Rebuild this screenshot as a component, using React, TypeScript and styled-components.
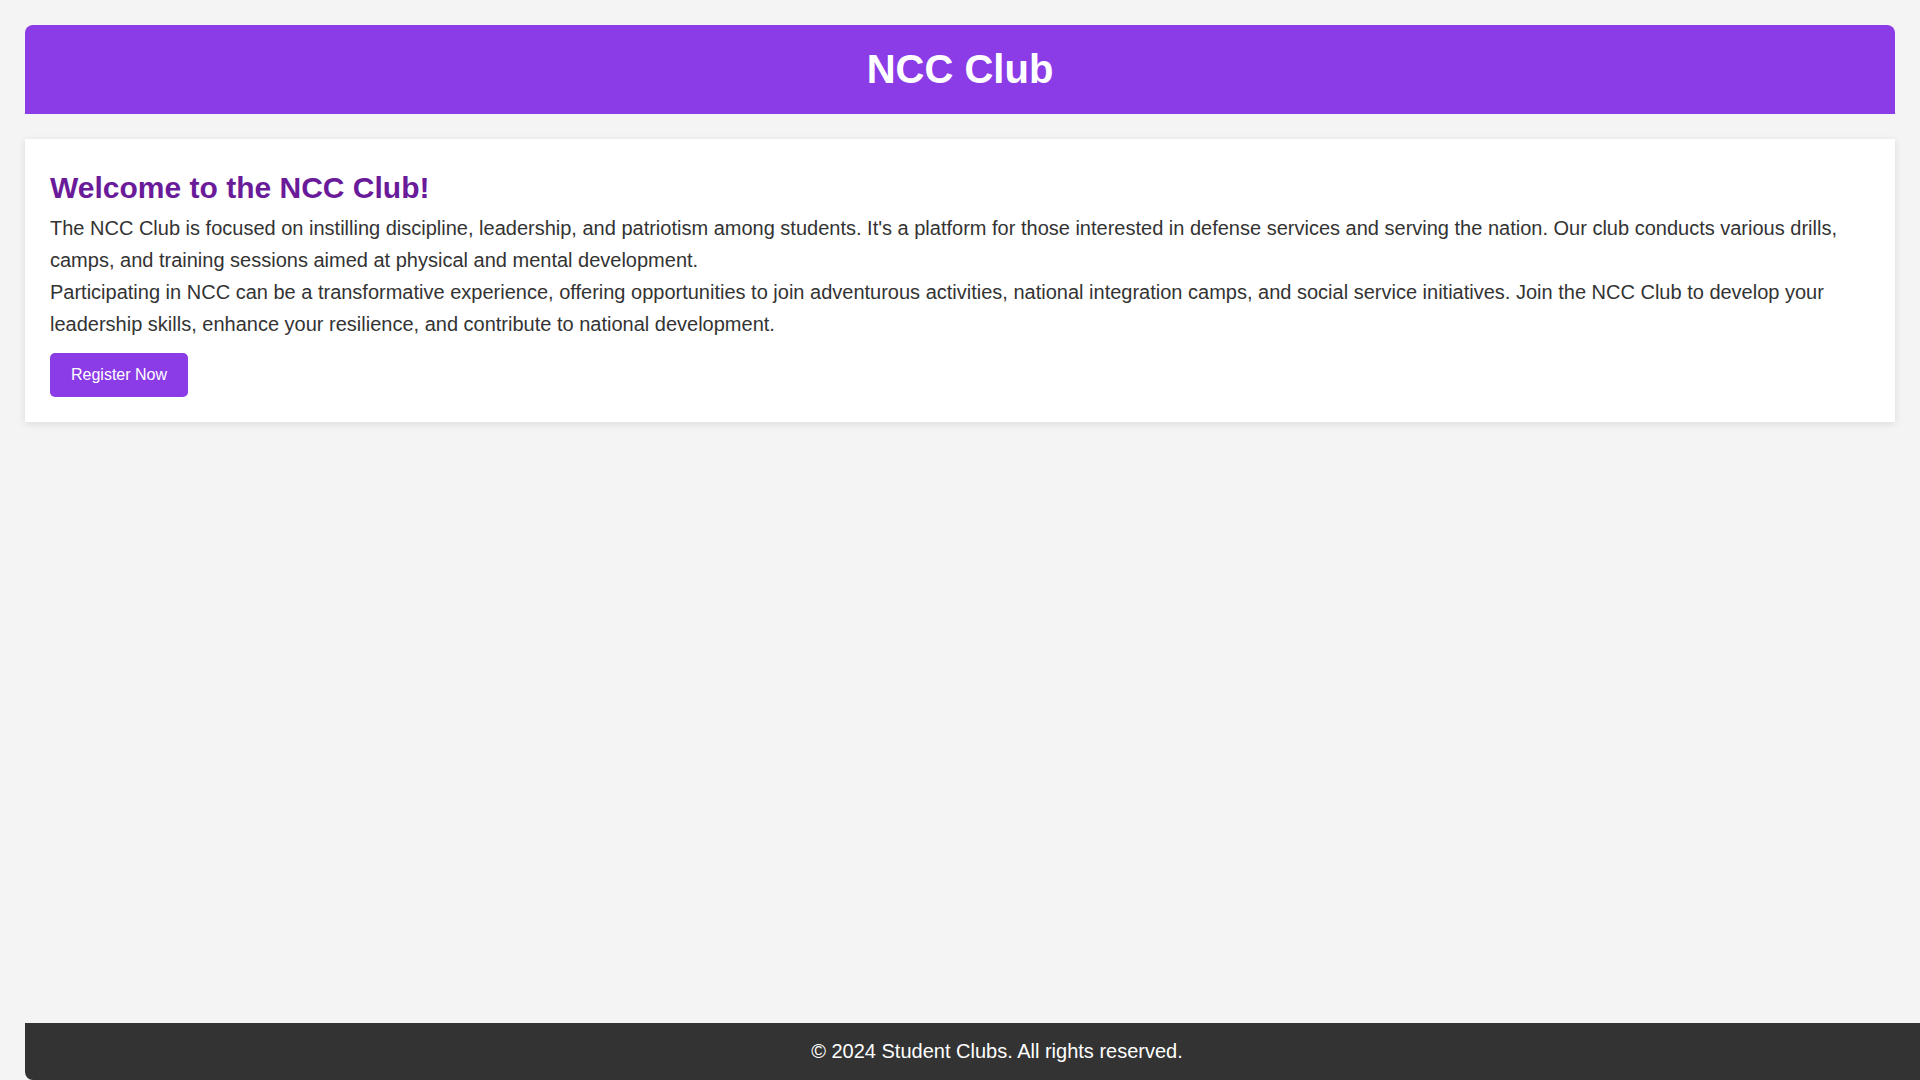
// NCC Club page

// ___________________________________________________________________

import * as React from 'react'
import styled, { createGlobalStyle } from 'styled-components'

// ___________________________________________________________________

const colors = {
  bg: '#f4f4f4',
  primary: '#8b3ce7',
  heading: '#6a1b9a',
  text: '#333333',
  footer: '#333333',
  white: '#ffffff'
}

const GlobalStyle = createGlobalStyle`
  *, *::before, *::after { box-sizing: border-box; }
  body {
    margin: 0;
    background: ${colors.bg};
    font-family: "Liberation Sans", Arial, sans-serif;
    color: ${colors.text};
    overflow-x: hidden;
  }
`

const App: React.FC = () => (
  <>
    <GlobalStyle />
    <Page>
      <Header>
        <Title>NCC Club</Title>
      </Header>

      <Card>
        <Heading>Welcome to the NCC Club!</Heading>
        <Para>
          The NCC Club is focused on instilling discipline, leadership, and
          patriotism among students. It's a platform for those interested in
          defense services and serving the nation. Our club conducts various
          drills, camps, and training sessions aimed at physical and mental
          development.
        </Para>
        <Para>
          Participating in NCC can be a transformative experience, offering
          opportunities to join adventurous activities, national integration
          camps, and social service initiatives. Join the NCC Club to develop
          your leadership skills, enhance your resilience, and contribute to
          national development.
        </Para>
        <Button type="button">Register Now</Button>
      </Card>

      <Footer>&copy; 2024 Student Clubs. All rights reserved.</Footer>
    </Page>
  </>
)

export default App

// ___________________________________________________________________

const Page = styled.div`
  display: flex;
  flex-direction: column;
  min-height: 100vh;
  padding: 25px 25px 0;
  overflow-x: hidden;
`

const Header = styled.header`
  background: ${colors.primary};
  border-radius: 8px 8px 0 0;
  padding: 21px 20px 22px;
  text-align: center;
`

const Title = styled.h1`
  margin: 0;
  color: ${colors.white};
  font-size: 40px;
  font-weight: 700;
  line-height: 46px;
`

const Card = styled.section`
  margin-top: 25px;
  background: ${colors.white};
  padding: 25px;
  box-shadow: 0 2px 8px rgba(0, 0, 0, 0.1);
`

const Heading = styled.h2`
  margin: 7px 0 7px;
  color: ${colors.heading};
  font-size: 30px;
  font-weight: 700;
  line-height: normal;
`

const Para = styled.p`
  margin: 0;
  font-size: 20px;
  line-height: 32px;
  color: ${colors.text};
`

const Button = styled.button`
  display: inline-flex;
  align-items: center;
  height: 44px;
  margin-top: 13px;
  padding: 0 21px;
  border: none;
  border-radius: 5px;
  background: ${colors.primary};
  color: ${colors.white};
  font-family: inherit;
  font-size: 16px;
  cursor: pointer;
`

/* the footer runs past the right edge of the window, as in the original */
const Footer = styled.footer`
  margin-top: auto;
  margin-right: -74px;
  background: ${colors.footer};
  color: ${colors.white};
  border-radius: 0 0 8px 8px;
  padding: 17px 20px;
  font-size: 20px;
  line-height: 23px;
  text-align: center;
`
